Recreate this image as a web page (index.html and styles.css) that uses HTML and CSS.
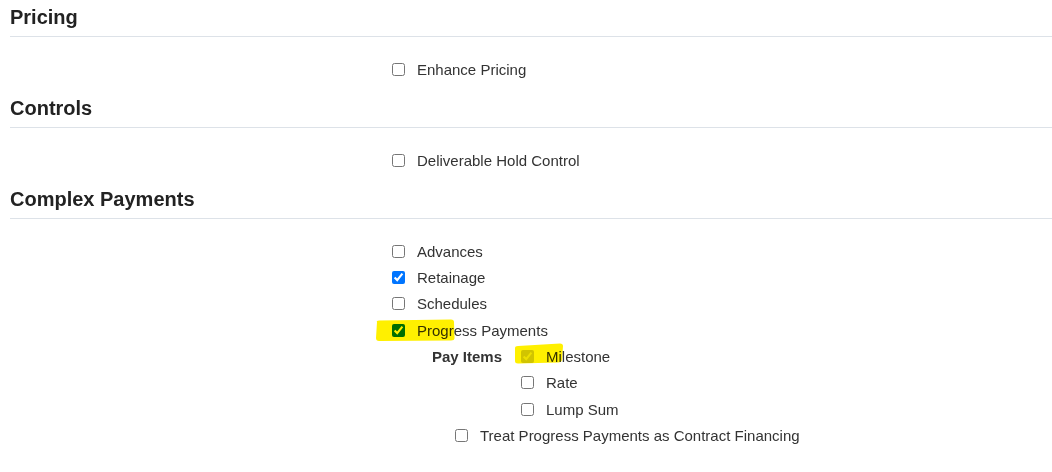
FILE: index.html
```html
<!DOCTYPE html>
<html lang="en">
<head>
<meta charset="utf-8">
<title>Settings</title>
<link rel="stylesheet" href="styles.css">
</head>
<body>
<section class="section">
  <h2 class="section-title">Pricing</h2>
  <div class="section-body">
    <label class="check-row"><input type="checkbox"><span>Enhance Pricing</span></label>
  </div>
</section>
<section class="section">
  <h2 class="section-title">Controls</h2>
  <div class="section-body">
    <label class="check-row"><input type="checkbox"><span>Deliverable Hold Control</span></label>
  </div>
</section>
<section class="section">
  <h2 class="section-title">Complex Payments</h2>
  <div class="section-body">
    <label class="check-row"><input type="checkbox"><span>Advances</span></label>
    <label class="check-row"><input type="checkbox" checked><span>Retainage</span></label>
    <label class="check-row"><input type="checkbox"><span>Schedules</span></label>
    <label class="check-row hl-row">
      <svg class="hl hl-progress" width="80" height="23" viewBox="0 0 80 23"><path d="M2,3 Q1,1.5 4,1.5 L76,0.5 Q79,0.5 79,3 L79.5,19 Q79.5,21.5 76,21.5 L4,22 Q1,22 1,19 Z" /></svg>
      <input type="checkbox" checked><span>Progress Payments</span>
    </label>
    <div class="pay-items">
      <div class="pay-label">Pay Items</div>
      <div class="pay-options">
        <label class="check-row hl-row">
          <svg class="hl hl-milestone" width="50" height="22" viewBox="0 0 50 22"><path d="M1,5 Q1,3 4,3 L46,0.5 Q49,0.5 49,3 L48,17 Q47.5,19.5 44,19.5 L4,20.5 Q1,20.5 1,18 Z" /></svg>
          <input type="checkbox" checked disabled><span>Milestone</span>
        </label>
        <label class="check-row"><input type="checkbox"><span>Rate</span></label>
        <label class="check-row"><input type="checkbox"><span>Lump Sum</span></label>
      </div>
    </div>
    <label class="check-row treat-row"><input type="checkbox"><span>Treat Progress Payments as Contract Financing</span></label>
  </div>
</section>
</body>
</html>
```

FILE: styles.css
```css
html, body {
  margin: 0;
  padding: 0;
  background: #ffffff;
}
body {
  padding: 0 0 0 10px;
  font-family: "Liberation Sans", Arial, sans-serif;
  font-size: 15px;
  color: #333333;
}
.section-title {
  margin: 5px 0 0 0;
  font-size: 20px;
  line-height: 24px;
  font-weight: bold;
  color: #222222;
  padding-bottom: 7px;
  border-bottom: 1px solid #dde2e8;
}
.section-body {
  padding: 19px 0 8.67px 382px;
}
.check-row {
  position: relative;
  display: flex;
  align-items: center;
  gap: 12px;
  height: 26.333px;
  white-space: nowrap;
}
.check-row input {
  margin: 0;
  width: 13px;
  height: 13px;
  flex: none;
}
.pay-items {
  display: flex;
  padding-left: 40px;
}
.pay-label {
  width: 89px;
  flex: none;
  font-weight: bold;
  height: 26.333px;
  display: flex;
  align-items: center;
}
.pay-options {
  display: flex;
  flex-direction: column;
}
.treat-row {
  padding-left: 63px;
}
.hl {
  position: absolute;
  z-index: 2;
  mix-blend-mode: multiply;
  pointer-events: none;
}
.hl path {
  fill: #fff000;
}
.hl-progress {
  left: -17px;
  top: 2px;
}
.hl-milestone {
  left: -7px;
  top: 0px;
}
```
